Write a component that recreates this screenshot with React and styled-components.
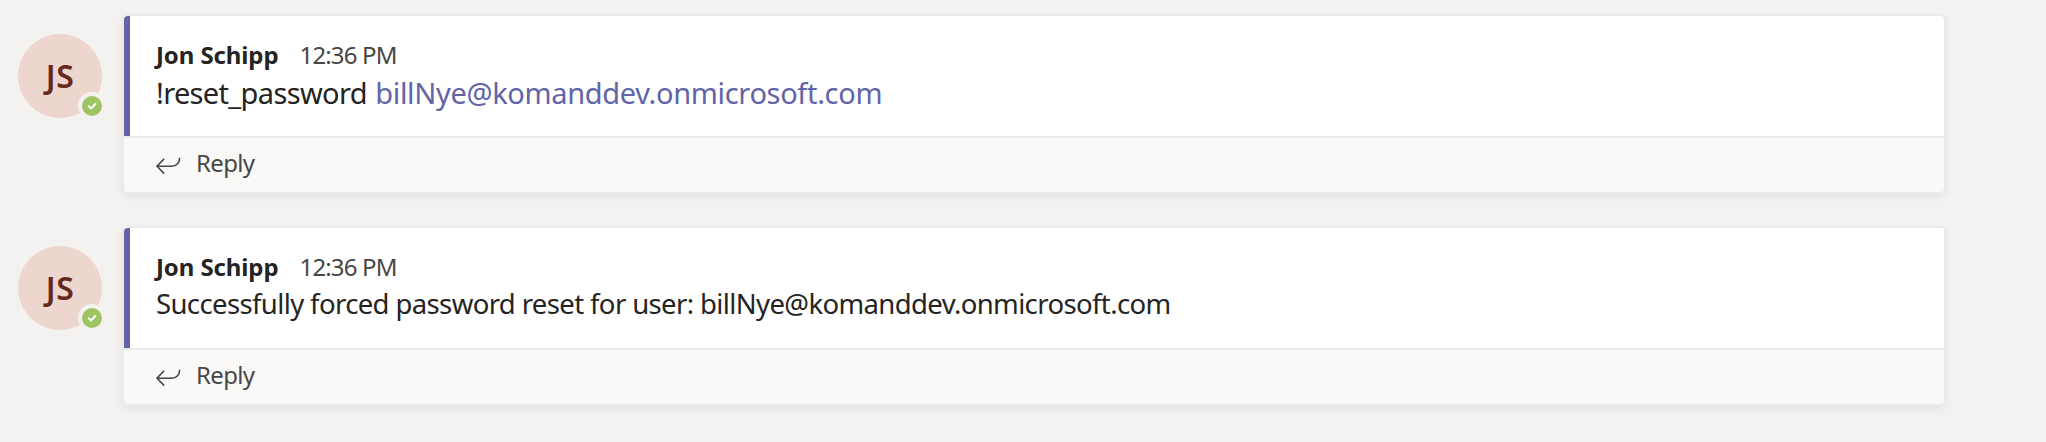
import React from "react";
import styled, { createGlobalStyle } from "styled-components";

const GlobalStyle = createGlobalStyle`
  * { box-sizing: border-box; }
  body {
    margin: 0;
    background: #f3f2f1;
    font-family: "Noto Sans", "Open Sans", sans-serif;
    color: #252423;
  }
`;

const Thread = styled.main`
  display: flex;
  flex-direction: column;
  gap: 36px;
  min-height: 442px;
  padding: 16px 102px 0 18px;
  background: #f3f2f1;
`;

const Message = styled.article`
  display: flex;
  align-items: flex-start;
  gap: 22px;
`;

const Avatar = styled.div`
  position: relative;
  flex: none;
  display: flex;
  align-items: center;
  justify-content: center;
  width: 84px;
  height: 84px;
  margin-top: 18px;
  border-radius: 50%;
  background: #edd6ce;
`;

const Initials = styled.span`
  color: #65281d;
  font-size: 32px;
  font-weight: 600;
  line-height: 40px;
  letter-spacing: 0.4px;
`;

const Presence = styled.svg`
  position: absolute;
  right: -4px;
  bottom: -2px;
  width: 28px;
  height: 28px;
`;

const Card = styled.section`
  flex: 1;
  height: 176px;
  border-radius: 4px;
  background: #faf9f8;
  box-shadow: 0 0 0 2px #ecebe9, 0 3px 9px 1px rgba(0, 0, 0, 0.08);
  overflow: hidden;
`;

const Body = styled.div`
  height: 122px;
  padding: 23px 26px 0 32px;
  border-bottom: 2px solid #ebebea;
  background: linear-gradient(to right, #6264a7 6px, #fff 6px);
`;

const Meta = styled.header`
  display: flex;
  gap: 21px;
  font-size: 24px;
  line-height: 32px;
`;

const Author = styled.strong`
  font-weight: 700;
  letter-spacing: -0.1px;
`;

const Time = styled.time`
  color: #484644;
  letter-spacing: -0.85px;
`;

const Text = styled.p`
  margin: 0;
  font-size: ${(p) => (p.$large ? 29 : 27.5)}px;
  line-height: ${(p) => (p.$large ? 43 : 41)}px;
  letter-spacing: ${(p) => (p.$large ? -0.65 : -0.62)}px;
  word-spacing: ${(p) => (p.$large ? 1.5 : 0)}px;
  white-space: nowrap;
`;

const MailLink = styled.a`
  color: #6264a7;
  letter-spacing: -0.33px;
  text-decoration: none;
`;

const Reply = styled.button`
  display: flex;
  align-items: center;
  gap: 14px;
  height: 49px;
  padding: 0 0 0 32px;
  border: 0;
  background: none;
  color: #484644;
  font: inherit;
  font-size: 24px;
  letter-spacing: -0.65px;
`;

const ReplyIcon = styled.svg`
  width: 26px;
  height: 20px;
  margin-top: 7px;
`;

function ChatMessage({ large, children }) {
  return (
    <Message>
      <Avatar>
        <Initials>JS</Initials>
        <Presence viewBox="0 0 28 28">
          <circle cx="14" cy="14" r="14" fill="#f3f2f1" />
          <circle cx="14" cy="14" r="10" fill="#9fc463" />
          <path d="M10.8 14.2 L13 16.4 L17.4 12" fill="none" stroke="#fff" strokeWidth="2" strokeLinecap="round" />
        </Presence>
      </Avatar>
      <Card>
        <Body>
          <Meta>
            <Author>Jon Schipp</Author>
            <Time>12:36 PM</Time>
          </Meta>
          <Text $large={large}>{children}</Text>
        </Body>
        <Reply>
          <ReplyIcon viewBox="0 0 26 20" fill="none" stroke="#484644" strokeWidth="1.6">
            <path d="M8.2 2.8 L1 10.2 L8.2 17.6 M1 10.2 H15.5 C20.5 10.2 23.6 7 23.6 1.8" />
          </ReplyIcon>
          Reply
        </Reply>
      </Card>
    </Message>
  );
}

export default function App() {
  return (
    <>
      <GlobalStyle />
      <Thread>
        <ChatMessage large>
          !reset_password <MailLink>billNye@komanddev.onmicrosoft.com</MailLink>
        </ChatMessage>
        <ChatMessage>
          Successfully forced password reset for user: billNye@komanddev.onmicrosoft.com
        </ChatMessage>
      </Thread>
    </>
  );
}
